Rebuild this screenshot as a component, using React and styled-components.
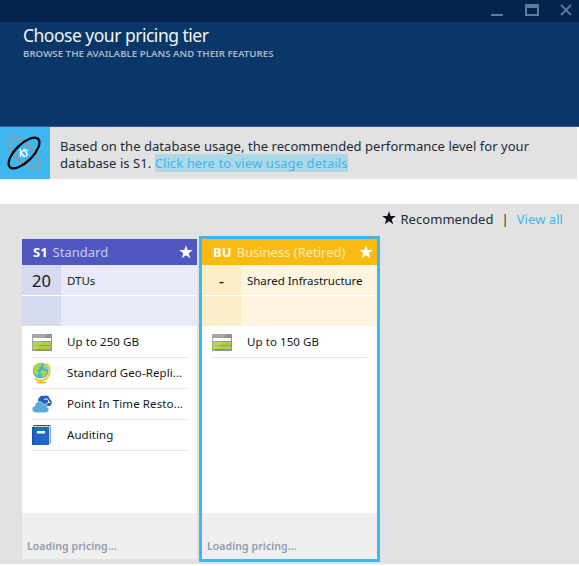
import React from "react";
import styled, { createGlobalStyle } from "styled-components";

const GlobalStyle = createGlobalStyle`
  * { box-sizing: border-box; }
  body { margin: 0; background: #fff; font-family: "Noto Sans", "Open Sans", sans-serif; color: #1f2a35; }
  svg { display: block; flex: none; }
`;

const Blade = styled.div`
  width: 579px;
  height: 566px;
  overflow: hidden;
  display: flex;
  flex-direction: column;
`;

const TitleBar = styled.div`
  height: 22px;
  flex: none;
  background: #05234d;
  display: flex;
  justify-content: flex-end;
`;

const Header = styled.header`
  height: 105px;
  flex: none;
  background: #0a3767;
  border-bottom: 1px solid #3c52b0;
  padding: 1px 0 0 23px;
`;

const Title = styled.h1`
  margin: 0;
  font-size: 17.5px;
  line-height: 24px;
  font-weight: 400;
  letter-spacing: -0.5px;
  color: #f1f5f9;
  white-space: nowrap;
`;

const Subtitle = styled.div`
  font-size: 9.7px;
  line-height: 13px;
  font-weight: 600;
  letter-spacing: 0;
  color: #a9b7c8;
  white-space: nowrap;
`;

const Notice = styled.section`
  width: 577px;
  height: 52px;
  flex: none;
  background: #e2e2e2;
  display: flex;
`;

const NoticeIcon = styled.div`
  width: 50px;
  background: #3eb7f0;
`;

const NoticeText = styled.p`
  margin: 0;
  padding: 11px 0 0 10px;
  font-size: 13px;
  line-height: 17px;
  letter-spacing: 0.045px;
  white-space: nowrap;
`;

const UsageLink = styled.a`
  color: #3eb7f0;
  background: #add8e6;
  letter-spacing: 0.1px;
`;

const Plans = styled.main`
  margin-top: 25px;
  height: 360px;
  flex: none;
  background: #e2e2e2;
`;

const Filters = styled.div`
  height: 32px;
  padding: 0 16px 0 0;
  display: flex;
  justify-content: flex-end;
  font-size: 13px;
  line-height: 31px;
  letter-spacing: 0.05px;
  svg { margin: 7px 4px 0 0; }
`;

const Divider = styled.span`
  margin: 0 8px;
`;

const ViewAll = styled.a`
  color: #3eb7f0;
`;

const Cards = styled.div`
  display: flex;
  padding-left: 19px;
`;

const Card = styled.article`
  width: 181px;
  height: 326px;
  border: 3px solid ${(p) => (p.$selected ? "#3eb7f0" : "transparent")};
  background: #fff;
  background-clip: padding-box;
  display: flex;
  flex-direction: column;
  & + & { margin-left: -1px; }
`;

const CardHeader = styled.div`
  height: 26px;
  flex: none;
  background: ${(p) => p.$color};
  display: flex;
  align-items: center;
  padding: 0 4px 0 11px;
  font-size: 13px;
  svg { margin-left: auto; }
`;

const Code = styled.b`
  color: #fff;
  margin-right: 5px;
  font-weight: 700;
`;

const PlanName = styled.span`
  color: ${(p) => p.$color};
  white-space: nowrap;
`;

const Metric = styled.div`
  display: grid;
  grid-template-columns: 39px 1fr;
  height: 30px;
  flex: none;
  background: linear-gradient(to right, ${(p) => p.$dark} 39px, ${(p) => p.$light} 39px);
  line-height: 31px;
  & + & { margin-top: 1px; }
`;

const MetricValue = styled.span`
  text-align: center;
  font-size: 16.5px;
  line-height: 32px;
  color: #0f1820;
`;

const MetricLabel = styled.span`
  padding-left: 6px;
  font-size: 11.5px;
  letter-spacing: -0.03px;
  white-space: nowrap;
  color: #0f1820;
`;

const Features = styled.div`
  flex: 1;
  background: #fff;
  padding: 1px 10px 0;
`;

const Feature = styled.div`
  height: 31px;
  border-bottom: 1px solid #e2e3f1;
  display: flex;
  align-items: center;
  gap: 15px;
  font-size: 11.5px;
  line-height: 30px;
  color: #0f1820;
`;

const FeatureName = styled.span`
  white-space: nowrap;
  letter-spacing: 0.08px;
`;

const CardFooter = styled.div`
  height: 46px;
  flex: none;
  background: #efefef;
  padding: 24px 0 0 5px;
  font-size: 10.5px;
  line-height: 18px;
  font-weight: 600;
  letter-spacing: 0.08px;
  color: #929cac;
  white-space: nowrap;
`;

const WindowButtons = () => (
  <svg width="109" height="22" viewBox="0 0 109 22" fill="none" stroke="#5d7b9c">
    <path d="M21 15H33" strokeWidth="2" />
    <path d="M55 5H69M55 15H69M56 4V16M68 4V16" strokeWidth="2" />
    <path d="M55 7H69" strokeWidth="2" />
    <path d="M91 5L101 15M101 5L91 15" strokeWidth="1.8" />
  </svg>
);

const Star = ({ size = 14, color = "#fff" }) => (
  <svg width={size} height={size} viewBox="0 0 14 14" fill={color}>
    <path d="M7 .3 8.7 5.1H13.8L9.7 8.2 11.2 13.2 7 10.2 2.8 13.2 4.3 8.2.2 5.1H5.3Z" />
  </svg>
);

const OrbitIcon = () => (
  <svg width="50" height="52" viewBox="0 0 50 52" fill="none">
    <ellipse cx="24" cy="26" rx="20" ry="8.5" transform="rotate(45 24 26)" stroke="#93999c" strokeWidth="2" />
    <g stroke="#fff" strokeWidth="1.4">
      <path d="M20.5 22V30M25 22 21 25.5 24.5 30" />
      <path d="M28 23.5Q25 22.5 25 24.5 27.5 25.5 27 28.5L24 29.5" strokeWidth="1.3" />
    </g>
    <ellipse cx="24" cy="26" rx="20" ry="8.7" transform="rotate(-45 24 26)" stroke="#000" strokeWidth="2.2" />
  </svg>
);

const StorageIcon = () => (
  <svg width="20" height="17" viewBox="0 0 20 17">
    <path fill="#929292" d="M0 0H20V17H0Z" />
    <path fill="#b4b4b4" d="M0 0H15L2 17H0Z" opacity=".6" />
    <path fill="#fff" d="M1 4H19V7H1Z" />
    <path fill="#a9d13b" d="M1 8H19V11H1ZM1 12H19V15H1Z" />
    <path fill="#fff" d="M1 8H11L6 15H1Z" opacity=".15" />
  </svg>
);

const GlobeIcon = () => (
  <svg width="20" height="22" viewBox="0 0 20 22">
    <path d="M14 1C20 6 19 17 9.5 18.5Q5.5 19 2.5 16" fill="none" stroke="#f8c62a" strokeWidth="1.8" />
    <path d="M9 18V20M5 20.5H14" stroke="#f3b715" strokeWidth="2" />
    <circle cx="8.7" cy="8.7" r="7.9" fill="#3eb5df" />
    <path fill="#b2d34a" d="M3 3 6 1 11 1.5 9 4 6.5 5 8 7 5 8.5 7 11 5 14 2 10.5 1 6ZM12 2 15.5 5 16.4 8 13 7 11 4.5ZM10 8 14 9 15.5 11 12 15 9.5 16 10 13 8 10Z" />
  </svg>
);

const CloudIcon = () => (
  <svg width="20" height="18" viewBox="0 0 20 18">
    <path fill="#2463bd" d="M6 6C6 2 9 0 12 1 15-.5 18 2 17.5 4 20.5 5 20.5 9.500 18 11L8 12Z" />
    <path d="M12 4.500Q16 2.500 17 7M14.500 9Q15.500 6.500 18.500 7.500" fill="none" stroke="#fff" strokeWidth="1" />
    <path fill="#59abd4" stroke="#fff" strokeWidth=".5" d="M3.500 17.700C-1 17.200-.7 11.300 3 11 3 5.700 9.500 5.200 11 9 14 8.500 16 10.500 15 12 18 12.800 17.300 17.700 14 17.700Z" />
  </svg>
);

const BookIcon = () => (
  <svg width="20" height="20" viewBox="0 0 20 20">
    <path fill="#1e56ad" d="M1.500 0H18.500V19H1Z" />
    <path fill="#d9d0c5" d="M2 1H18V19H16V2H1Z" />
    <path fill="#2466c7" d="M0 2H17V20H0Z" />
    <path fill="#1e56ad" d="M0 2H2V20H0Z" />
    <path fill="#fff" d="M5 6H13V8.500H5Z" />
  </svg>
);

const plans = [
  {
    code: "S1", name: "Standard", value: "20", metric: "DTUs",
    color: "#4e58c0", nameColor: "#c7cbed", dark: "#d5daef", light: "#e8eaf7",
    features: [
      [StorageIcon, "Up to 250 GB"],
      [GlobeIcon, "Standard Geo-Repli..."],
      [CloudIcon, "Point In Time Resto..."],
      [BookIcon, "Auditing"],
    ],
  },
  {
    code: "BU", name: "Business (Retired)", value: "-", metric: "Shared Infrastructure",
    color: "#f9bb13", nameColor: "#feebba", dark: "#fbedc6", light: "#fdf5e0", selected: true,
    features: [[StorageIcon, "Up to 150 GB"]],
  },
];

export default function App() {
  return (
    <Blade>
      <GlobalStyle />
      <TitleBar><WindowButtons /></TitleBar>
      <Header>
        <Title>Choose your pricing tier</Title>
        <Subtitle>BROWSE THE AVAILABLE PLANS AND THEIR FEATURES</Subtitle>
      </Header>
      <Notice>
        <NoticeIcon><OrbitIcon /></NoticeIcon>
        <NoticeText>
          Based on the database usage, the recommended performance level for your<br />
          database is S1. <UsageLink>Click here to view usage details</UsageLink>
        </NoticeText>
      </Notice>
      <Plans>
        <Filters>
          <Star color="#0c1219" />
          <span>Recommended</span>
          <Divider>|</Divider>
          <ViewAll>View all</ViewAll>
        </Filters>
        <Cards>
          {plans.map((p) => (
            <Card key={p.code} $selected={p.selected}>
              <CardHeader $color={p.color}>
                <Code>{p.code}</Code>
                <PlanName $color={p.nameColor}>{p.name}</PlanName>
                <Star />
              </CardHeader>
              <Metric $dark={p.dark} $light={p.light}>
                <MetricValue>{p.value}</MetricValue>
                <MetricLabel>{p.metric}</MetricLabel>
              </Metric>
              <Metric $dark={p.dark} $light={p.light} />
              <Features>
                {p.features.map(([Icon, name]) => (
                  <Feature key={name}>
                    <Icon />
                    <FeatureName>{name}</FeatureName>
                  </Feature>
                ))}
              </Features>
              <CardFooter>Loading pricing...</CardFooter>
            </Card>
          ))}
        </Cards>
      </Plans>
    </Blade>
  );
}
